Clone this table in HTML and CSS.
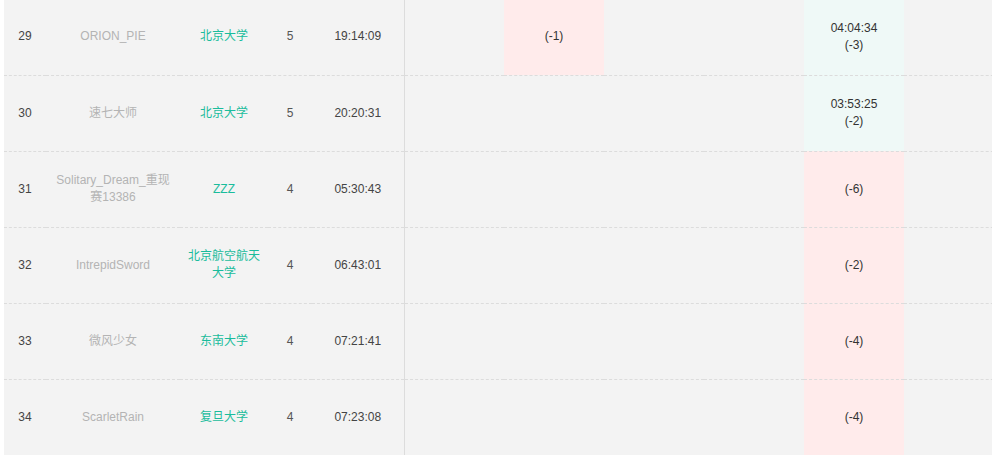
FILE: index.html
```html
<!DOCTYPE html>
<html lang="zh">
<head>
<meta charset="utf-8">
<title>Rank</title>
<link rel="stylesheet" href="styles.css">
</head>
<body>
<div class="board">
  <table class="rank">
    <colgroup>
      <col class="c-rank"><col class="c-name"><col class="c-school"><col class="c-solved"><col class="c-time">
      <col class="c-prob"><col class="c-prob"><col class="c-prob"><col class="c-prob"><col class="c-prob"><col class="c-prob">
    </colgroup>
    <tbody>
      <tr>
        <td class="rk">29</td><td class="nm">ORION_PIE</td><td class="sc">北京大学</td><td class="sv">5</td><td class="tm">19:14:09</td>
        <td class="pb first"></td><td class="pb fail">(-1)</td><td class="pb"></td><td class="pb"></td><td class="pb ok">04:04:34<br>(-3)</td><td class="pb"></td>
      </tr>
      <tr>
        <td class="rk">30</td><td class="nm">速七大师</td><td class="sc">北京大学</td><td class="sv">5</td><td class="tm">20:20:31</td>
        <td class="pb first"></td><td class="pb"></td><td class="pb"></td><td class="pb"></td><td class="pb ok">03:53:25<br>(-2)</td><td class="pb"></td>
      </tr>
      <tr>
        <td class="rk">31</td><td class="nm">Solitary_Dream_重现赛13386</td><td class="sc">ZZZ</td><td class="sv">4</td><td class="tm">05:30:43</td>
        <td class="pb first"></td><td class="pb"></td><td class="pb"></td><td class="pb"></td><td class="pb fail">(-6)</td><td class="pb"></td>
      </tr>
      <tr>
        <td class="rk">32</td><td class="nm">IntrepidSword</td><td class="sc">北京航空航天大学</td><td class="sv">4</td><td class="tm">06:43:01</td>
        <td class="pb first"></td><td class="pb"></td><td class="pb"></td><td class="pb"></td><td class="pb fail">(-2)</td><td class="pb"></td>
      </tr>
      <tr>
        <td class="rk">33</td><td class="nm">微风少女</td><td class="sc">东南大学</td><td class="sv">4</td><td class="tm">07:21:41</td>
        <td class="pb first"></td><td class="pb"></td><td class="pb"></td><td class="pb"></td><td class="pb fail">(-4)</td><td class="pb"></td>
      </tr>
      <tr>
        <td class="rk">34</td><td class="nm">ScarletRain</td><td class="sc">复旦大学</td><td class="sv">4</td><td class="tm">07:23:08</td>
        <td class="pb first"></td><td class="pb"></td><td class="pb"></td><td class="pb"></td><td class="pb fail">(-4)</td><td class="pb"></td>
      </tr>
    </tbody>
  </table>
</div>
</body>
</html>
```

FILE: styles.css
```css
html, body {
  margin: 0;
  padding: 0;
  background: #ffffff;
}

body {
  font-family: "Liberation Sans", Arial, "Noto Sans CJK SC", sans-serif;
  font-size: 12px;
  color: #333333;
}

.board {
  margin: 0 4px;
  width: 988px;
  overflow: hidden;
  background: #f3f3f3;
}

.rank {
  table-layout: fixed;
  border-collapse: collapse;
  width: 1000px;
  margin-top: -1px;
  background: #f3f3f3;
}

.c-rank { width: 42px; }
.c-name { width: 134px; }
.c-school { width: 88px; }
.c-solved { width: 44px; }
.c-time { width: 92px; }
.c-prob { width: 100px; }

.rank td {
  height: 76px;
  padding: 0 8px;
  box-sizing: border-box;
  text-align: center;
  vertical-align: middle;
  line-height: 17px;
  border-bottom: 1px dashed #dcdcdc;
  word-break: break-all;
}

.rk { color: #444444; }
.nm { color: #b4b4b4; }
.sc { color: #1abc9c; }
.sv { color: #555555; }
.tm { color: #444444; }

.pb { color: #333333; }
.pb.first { border-left: 1px solid #dcdcdc; }
.pb.fail { background: #ffebeb; }
.pb.ok { background: #eff9f7; }
```
